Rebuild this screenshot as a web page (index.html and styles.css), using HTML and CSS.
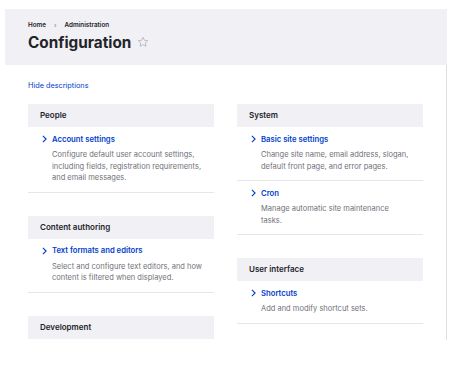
FILE: index.html
```html
<!DOCTYPE html>
<html lang="en">
<head>
    <meta charset="UTF-8">
    <meta name="viewport" content="width=device-width, initial-scale=1.0">
    <title>Configuration</title>
    <link rel="stylesheet" href="styles.css">
</head>
<body>
    <div class="page">
        <div class="page-header">
            <div class="breadcrumb">
                <a href="#">Home</a>
                <span class="sep">&rsaquo;</span>
                <a href="#">Administration</a>
            </div>
            <h1>Configuration
                <svg class="star" viewBox="0 0 24 24" width="12" height="12">
                    <path d="M12 2.5l2.9 6.1 6.6.8-4.9 4.6 1.3 6.6L12 17.3l-5.9 3.3 1.3-6.6-4.9-4.6 6.6-.8z" fill="none" stroke="#a8a8b0" stroke-width="1.4" stroke-linejoin="round"/>
                </svg>
            </h1>
        </div>

        <div class="content">
            <a class="toggle" href="#">Hide descriptions</a>
            <div class="columns">
                <div class="column">
                    <div class="panel">
                        <h2>People</h2>
                        <div class="item">
                            <a class="item-link" href="#"><svg viewBox="0 0 6 10" width="5" height="8"><path d="M1 1l4 4-4 4" fill="none" stroke="#003ecc" stroke-width="1.4"/></svg>Account settings</a>
                            <p>Configure default user account settings, including fields, registration requirements, and email messages.</p>
                        </div>
                    </div>
                    <div class="panel">
                        <h2>Content authoring</h2>
                        <div class="item">
                            <a class="item-link" href="#"><svg viewBox="0 0 6 10" width="5" height="8"><path d="M1 1l4 4-4 4" fill="none" stroke="#003ecc" stroke-width="1.4"/></svg>Text formats and editors</a>
                            <p>Select and configure text editors, and how content is filtered when displayed.</p>
                        </div>
                    </div>
                    <div class="panel">
                        <h2>Development</h2>
                    </div>
                </div>

                <div class="column">
                    <div class="panel">
                        <h2>System</h2>
                        <div class="item">
                            <a class="item-link" href="#"><svg viewBox="0 0 6 10" width="5" height="8"><path d="M1 1l4 4-4 4" fill="none" stroke="#003ecc" stroke-width="1.4"/></svg>Basic site settings</a>
                            <p>Change site name, email address, slogan, default front page, and error pages.</p>
                        </div>
                        <div class="item">
                            <a class="item-link" href="#"><svg viewBox="0 0 6 10" width="5" height="8"><path d="M1 1l4 4-4 4" fill="none" stroke="#003ecc" stroke-width="1.4"/></svg>Cron</a>
                            <p>Manage automatic site maintenance tasks.</p>
                        </div>
                    </div>
                    <div class="panel">
                        <h2>User interface</h2>
                        <div class="item">
                            <a class="item-link" href="#"><svg viewBox="0 0 6 10" width="5" height="8"><path d="M1 1l4 4-4 4" fill="none" stroke="#003ecc" stroke-width="1.4"/></svg>Shortcuts</a>
                            <p>Add and modify shortcut sets.</p>
                        </div>
                    </div>
                </div>
            </div>
        </div>
    </div>
</body>
</html>
```

FILE: styles.css
```css
body {
    margin: 0;
    padding: 9px 0 0 5px;
    font-family: Inter, "Noto Sans", sans-serif;
    background-color: #fff;
    color: #232429;
}
a {
    text-decoration: none;
}
.page {
    width: 442px;
}
.page-header {
    background-color: #f0f0f5;
    padding: 12px 23px 13px;
}
.breadcrumb {
    display: flex;
    align-items: center;
    gap: 6px;
    height: 8px;
    font-size: 6.3px;
    font-weight: 600;
}
.breadcrumb a {
    color: #232429;
}
.breadcrumb .sep {
    color: #8e929c;
    margin: 0 2px;
}
h1 {
    display: flex;
    align-items: center;
    gap: 6px;
    margin: 3px 0 0;
    height: 20px;
    font-size: 15.3px;
    font-weight: 700;
    color: #232429;
}
.star {
    display: block;
}
.content {
    border-right: 1px solid #dedee3;
    padding: 15px 23px 0;
    height: 275px;
    box-sizing: border-box;
    width: 442px;
}
.toggle {
    display: block;
    height: 12px;
    line-height: 12px;
    font-size: 7.3px;
    color: #003ecc;
    margin-bottom: 12px;
}
.columns {
    display: flex;
    gap: 23px;
}
.column {
    width: 186px;
}
.panel {
    margin-bottom: 23px;
}
h2 {
    margin: 0;
    height: 23px;
    line-height: 23px;
    padding-left: 12px;
    background-color: #f0f0f5;
    font-size: 8px;
    font-weight: 600;
    color: #232429;
}
.item {
    padding: 6px 0 8px;
    border-bottom: 1px solid #e6e6ea;
}
.item-link {
    display: flex;
    align-items: center;
    gap: 5px;
    height: 12px;
    padding-left: 14px;
    font-size: 7.7px;
    font-weight: 600;
    color: #003ecc;
}
.item p {
    margin: 4px 0 0;
    padding: 0 11.6px 0 24px;
    font-size: 7.5px;
    line-height: 11.5px;
    color: #707078;
}
```
